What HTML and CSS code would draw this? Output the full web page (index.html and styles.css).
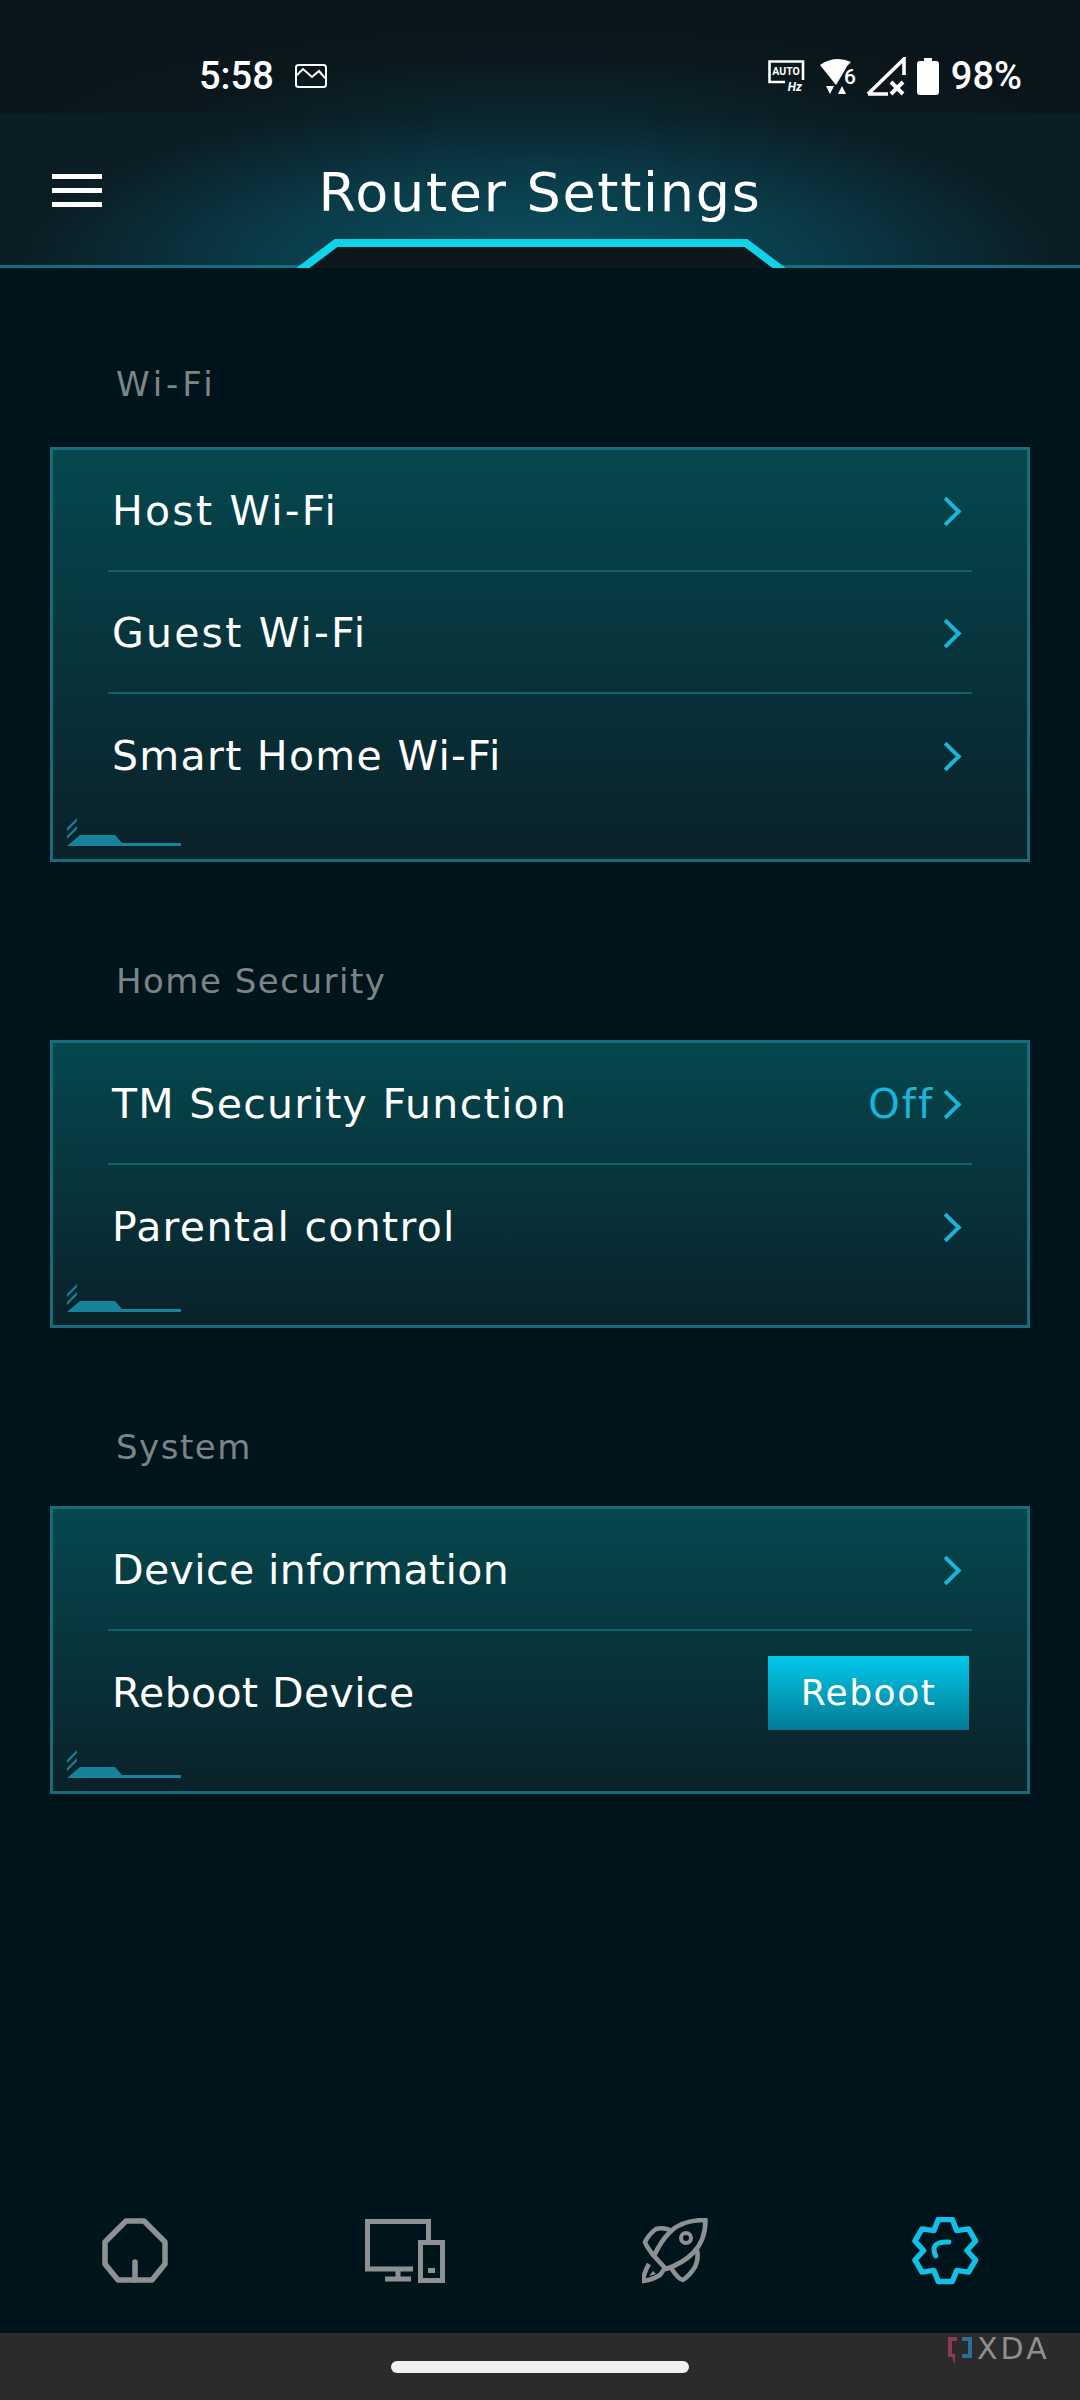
FILE: index.html
```html
<!DOCTYPE html>
<html>

<head>
    <meta charset="UTF-8">
    <title>Router Settings</title>
    <link rel="stylesheet" href="styles.css">
</head>

<body>

    <div id="all">
        <div id="status">
            <div class="status_left">
                <span class="clock">5:58</span>
                <svg class="pic_icon" width="32" height="24" viewBox="0 0 32 24">
                    <rect x="1" y="1" width="30" height="22" rx="2.5" fill="none" stroke="#fff" stroke-width="2" />
                    <path d="M2 11 L8 5 L17 13 L24 7 L30 14" fill="none" stroke="#fff" stroke-width="2" />
                </svg>
            </div>
            <div class="status_right">
                <svg width="37" height="33" viewBox="0 0 37 33">
                    <path d="M35 20 V1.5 H1.5 V22 H17" fill="none" stroke="#fff" stroke-width="2.6" />
                    <text x="18" y="15" class="auto_txt" text-anchor="middle">AUTO</text>
                    <text x="34" y="31" class="hz_txt" text-anchor="end">Hz</text>
                </svg>
                <svg class="wifi_icon" width="37" height="37" viewBox="0 0 37 37">
                    <path d="M0 7 Q15 -3 31 4 Q27 7 25 12 L16 27 Z" fill="#fff" />
                    <path d="M6 28 H14 L10 36 Z M18 36 H26 L22 28 Z" fill="#fff" />
                    <text x="30" y="26" class="wifi_txt" text-anchor="middle">6</text>
                </svg>
                <svg class="signal_icon" width="40" height="39" viewBox="0 0 40 39">
                    <path d="M2 37 L38 2 V18 M2 37 H22" fill="none" stroke="#fff" stroke-width="3.6" />
                    <path d="M25 25 L37 37 M37 25 L25 37" fill="none" stroke="#fff" stroke-width="4" />
                </svg>
                <svg class="batt_icon" width="22" height="37" viewBox="0 0 22 37">
                    <path d="M7 0 H15 V3 H19 Q22 3 22 6 V34 Q22 37 19 37 H3 Q0 37 0 34 V6 Q0 3 3 3 H7 Z" fill="#fff" />
                </svg>
                <span class="batt_txt">98%</span>
            </div>
        </div>

        <div id="head">
            <svg class="menu_icon" width="50" height="33" viewBox="0 0 50 33">
                <path d="M0 0 H50 V5 H0 Z M0 14 H50 V19 H0 Z M0 28 H50 V33 H0 Z" fill="#fff" />
            </svg>
            <div class="head_title">Router Settings</div>
            <!-- 顶部中间的凸起 -->
            <svg class="head_bump" width="492" height="30" viewBox="0 0 492 30">
                <path d="M7 30 L7 33 L41 5 H451 L485 33 Z" fill="#0c181c" />
                <path d="M4 33 L41 5 H451 L488 33" fill="none" stroke="#10d3ea" stroke-width="8" />
            </svg>
        </div>

        <div id="main">
            <div class="sec_name sec_wifi">Wi-Fi</div>
            <div class="card card_big">
                <div class="row"><span class="row_name name_wide">Host Wi-Fi</span><div class="row_right"><span class="arrow"></span></div></div>
                <div class="row"><span class="row_name name_wide">Guest Wi-Fi</span><div class="row_right"><span class="arrow"></span></div></div>
                <div class="row"><span class="row_name">Smart Home Wi-Fi</span><div class="row_right"><span class="arrow"></span></div></div>
                <svg class="deco" width="114" height="29" viewBox="0 0 114 29">
                    <path d="M0 29 L13 18 H48 L55 26 H114 V29 Z" fill="#16839a" />
                    <path d="M0 19 L10 9 V12 L0 22 Z M0 11 L10 1 V4 L0 14 Z" fill="#16839a" />
                </svg>
            </div>

            <div class="sec_name">Home Security</div>
            <div class="card">
                <div class="row"><span class="row_name">TM Security Function</span><div class="row_right"><span class="row_val">Off</span><span class="arrow"></span></div></div>
                <div class="row"><span class="row_name">Parental control</span><div class="row_right"><span class="arrow"></span></div></div>
                <svg class="deco" width="114" height="29" viewBox="0 0 114 29">
                    <path d="M0 29 L13 18 H48 L55 26 H114 V29 Z" fill="#16839a" />
                    <path d="M0 19 L10 9 V12 L0 22 Z M0 11 L10 1 V4 L0 14 Z" fill="#16839a" />
                </svg>
            </div>

            <div class="sec_name">System</div>
            <div class="card">
                <div class="row"><span class="row_name name_narrow">Device information</span><div class="row_right"><span class="arrow"></span></div></div>
                <div class="row"><span class="row_name name_narrow">Reboot Device</span><div class="row_right"><div class="reboot">Reboot</div></div></div>
                <svg class="deco" width="114" height="29" viewBox="0 0 114 29">
                    <path d="M0 29 L13 18 H48 L55 26 H114 V29 Z" fill="#16839a" />
                    <path d="M0 19 L10 9 V12 L0 22 Z M0 11 L10 1 V4 L0 14 Z" fill="#16839a" />
                </svg>
            </div>
        </div>

        <div id="nav">
            <div class="nav_item">
                <svg width="66" height="66" viewBox="0 0 66 66">
                    <path d="M24 3 H42 L63 24 V46 L50 62 H16 L3 46 V24 Z" fill="none" stroke="#8e9193" stroke-width="5.5" stroke-linejoin="round" />
                    <path d="M33 44 V62" fill="none" stroke="#8e9193" stroke-width="5.5" stroke-linecap="round" />
                </svg>
            </div>
            <div class="nav_item">
                <svg width="80" height="64" viewBox="0 0 80 64">
                    <path d="M48 50 H2.5 V2.5 H63.5 V21" fill="none" stroke="#8e9193" stroke-width="5" />
                    <path d="M33 50 V60 M20 60 H46" fill="none" stroke="#8e9193" stroke-width="5" />
                    <rect x="55.5" y="23.5" width="22" height="38" fill="none" stroke="#8e9193" stroke-width="5" />
                    <rect x="63" y="49" width="7" height="5" fill="#8e9193" />
                </svg>
            </div>
            <div class="nav_item">
                <svg width="66" height="66" viewBox="-1 0 66 66">
                    <path d="M62.5 2 C50 2 36 5 27 14 C20 21 15 29 11 38 L23 51 C32 48 42 43 50 35 C59 26 62.5 14 62.5 2 Z" fill="none" stroke="#8e9193" stroke-width="4.6" stroke-linejoin="round" />
                    <circle cx="43" cy="20" r="5" fill="none" stroke="#8e9193" stroke-width="4" />
                    <path d="M27 12 Q20 9 13 11 Q6 16 2 24 Q3 28 11 38" fill="none" stroke="#8e9193" stroke-width="4.6" stroke-linejoin="round" />
                    <path d="M54 32 Q56 40 52 49 Q47 57 40 62 Q36 62 28 50" fill="none" stroke="#8e9193" stroke-width="4.6" stroke-linejoin="round" />
                    <path d="M6 46 Q1 54 0 63 Q9 62 17 57 L22 50" fill="none" stroke="#8e9193" stroke-width="4.6" stroke-linejoin="round" />
                    <path d="M10 53 L6 58 L13 56 Z" fill="#8e9193" />
                </svg>
            </div>
            <div class="nav_item">
                <svg width="68" height="68" viewBox="0 0 68 68">
                    <path d="M27.3 2.5 H41.3 L45.8 13.6 L57.6 11.9 L64.6 24 L56 33.5 L64.6 43 L57.6 55.1 L45.8 53.4 L41.3 64.5 H27.3 L22.8 53.4 L11 55.1 L4 43 L12.6 33.5 L4 24 L11 11.9 L22.8 13.6 Z" fill="none" stroke="#12bfe6" stroke-width="5.5" stroke-linejoin="round" />
                    <path d="M24.7 39 Q18 24 38 25" fill="none" stroke="#12bfe6" stroke-width="5" stroke-linecap="round" />
                </svg>
            </div>
        </div>

        <div id="gesture">
            <div class="pill"></div>
            <div class="xda">
                <svg width="26" height="30" viewBox="0 0 26 30">
                    <path d="M10 1 H1 V21 H5 L8 29 V18 H5 V5 H10 Z" fill="#8b3a50" />
                    <path d="M15 1 H25 V22 H15 V18 H21 V5 H15 Z" fill="#2a6f98" />
                </svg>
                <span class="xda_txt">XDA</span>
            </div>
        </div>
    </div>

</body>

</html>
```

FILE: styles.css
```css
* {
    box-sizing: border-box;
}

body {
    margin: 0;
    background-color: #00141b;
    font-family: "DejaVu Sans", sans-serif;
    color: #fff;
}

#all {
    width: 1080px;
    height: 2400px;
    display: flex;
    flex-direction: column;
    overflow: hidden;
}

/* 状态栏 */

#status {
    height: 113px;
    padding: 54px 58px 0 199px;
    display: flex;
    justify-content: space-between;
    align-items: flex-start;
    background: radial-gradient(ellipse 560px 130px at 50% 130%, #0b2e36 0%, #0a181e 70%, #0a151b 100%);
    font-family: Roboto, sans-serif;
    font-weight: 500;
}

.status_left {
    display: flex;
    align-items: center;
    gap: 21px;
}

.clock {
    font-size: 38px;
    line-height: 44px;
}

.status_right {
    display: flex;
    align-items: center;
    gap: 15px;
}

.auto_txt {
    font-family: Roboto, sans-serif;
    font-size: 10.5px;
    font-weight: 700;
    fill: #fff;
}

.hz_txt {
    font-family: Roboto, sans-serif;
    font-size: 12px;
    font-weight: 700;
    font-style: italic;
    fill: #fff;
}

.wifi_txt {
    font-family: Roboto, sans-serif;
    font-size: 21px;
    font-weight: 500;
    fill: #fff;
}

.wifi_icon {
    margin-right: -6px;
}

.signal_icon {
    margin-right: -4px;
}

.batt_txt {
    font-size: 38px;
    line-height: 44px;
    margin-left: -3px;
}

/* 标题栏 */

#head {
    height: 155px;
    position: relative;
    padding: 0 0 0 52px;
    display: flex;
    align-items: center;
    background: radial-gradient(ellipse 520px 170px at 50% 100%, #0b5363 0%, #0a3a47 55%, #0b1d24 100%);
    border-bottom: 3px solid #0f7084;
}

.menu_icon {
    margin-top: 3px;
}

.head_title {
    position: absolute;
    left: 0;
    right: 0;
    top: 48px;
    text-align: center;
    font-size: 54px;
    line-height: 64px;
    letter-spacing: 1.7px;
}

.head_bump {
    position: absolute;
    left: 295px;
    bottom: -3px;
}

/* 中间的列表 */

#main {
    flex: 1;
    padding: 93px 50px 0;
    background-color: #00141b;
}

.sec_name {
    height: 50px;
    padding-top: 2px;
    line-height: 50px;
    margin: 92px 0 36px;
    padding-left: 66px;
    font-size: 34px;
    letter-spacing: 1.5px;
    color: #7c8487;
}

.sec_name:first-child {
    margin-top: 0;
}

.sec_wifi {
    padding-top: 0;
    line-height: 46px;
    letter-spacing: 3.9px;
}

.card {
    position: relative;
    padding: 0 55px 38px;
    border: 3px solid #166c7c;
    background: linear-gradient(#05474e, #0a2129);
}

.card_big {
    padding-bottom: 43px;
}

.row {
    height: 122px;
    display: flex;
    justify-content: space-between;
    align-items: center;
    padding: 2px 3px 0 4px;
    border-bottom: 2px solid #0f5f6c;
}

.row:last-of-type {
    border-bottom: 0;
}

.row_name {
    font-size: 41px;
    letter-spacing: 1.3px;
}

.row_name.name_wide {
    letter-spacing: 2.2px;
}

.row_name.name_narrow {
    letter-spacing: 0.4px;
}

.row_right {
    display: flex;
    align-items: center;
}

.row_val {
    font-size: 40px;
    letter-spacing: 2px;
    color: #19b5dc;
    margin-right: 2px;
}

.arrow {
    width: 21px;
    height: 21px;
    margin-right: 12px;
    border-top: 4px solid #19b5dc;
    border-right: 4px solid #19b5dc;
    transform: rotate(45deg);
}

.reboot {
    width: 201px;
    height: 74px;
    line-height: 74px;
    text-align: center;
    font-size: 36px;
    letter-spacing: 1.5px;
    background: linear-gradient(#03c9ec, #037a94);
}

.deco {
    position: absolute;
    left: 14px;
    bottom: 13px;
}

/* 底部导航 */

#nav {
    height: 164px;
    display: flex;
    background-color: #00141b;
}

.nav_item {
    width: 270px;
    display: flex;
    justify-content: center;
    align-items: center;
}

#gesture {
    height: 67px;
    position: relative;
    display: flex;
    justify-content: center;
    background-color: #2b2b2b;
}

.pill {
    width: 298px;
    height: 12px;
    margin-top: 28px;
    border-radius: 6px;
    background-color: #f0f0f0;
}

.xda {
    position: absolute;
    left: 947px;
    top: 3px;
    display: flex;
    align-items: flex-start;
    gap: 4px;
}

.xda_txt {
    font-size: 30px;
    line-height: 26px;
    letter-spacing: 3px;
    color: #8f8f8f;
}
```
